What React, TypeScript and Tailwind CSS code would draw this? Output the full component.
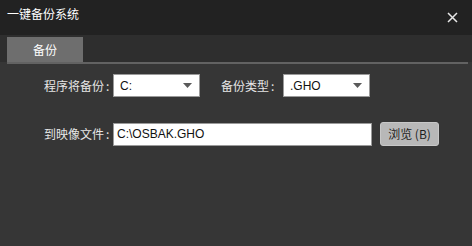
const font = "font-['Microsoft_YaHei','Noto_Sans_CJK_SC',sans-serif]";

const Arrow = () => (
  <svg width="9" height="5" viewBox="0 0 9 5" className="shrink-0">
    <path d="M0 0 H9 L4.5 5 Z" fill="#5a5a5a" />
  </svg>
);

const Select = ({ value }: { value: string }) => (
  <div className="flex h-[23px] w-[87px] items-center justify-between border border-[#9a9a9a] bg-white pl-[6px] pr-[7px] text-[12px] text-[#111] font-['Liberation_Sans',sans-serif]">
    <span>{value}</span>
    <Arrow />
  </div>
);

const App = () => {
  return (
    <div className={`flex h-[246px] w-[472px] flex-col bg-[#363636] ${font}`}>
      {/* title bar */}
      <div className="flex h-[35px] items-start justify-between bg-[#222222] pl-[7px] pr-[14px] pt-[7px]">
        <span className="text-[12px] leading-[13px] text-white">一键备份系统</span>
        <svg width="11" height="11" viewBox="0 0 11 11" className="mt-[5px]">
          <path d="M1 1 L10 10 M10 1 L1 10" stroke="#e8e8e8" strokeWidth="1.5" />
        </svg>
      </div>

      {/* tab strip */}
      <div className="flex h-[27px] bg-[#2e2e2e] pl-[7px] pt-[2px]">
        <div className="flex w-[76px] items-center justify-center bg-[#6e6e6e] text-[12px] text-white">
          备份
        </div>
      </div>
      <div className="ml-[7px] mr-[4px] h-[2px] bg-[#626262]" />

      {/* form */}
      <div className="flex flex-col gap-[25px] pl-[44px] pt-[10px] text-[12px] text-[#e6e6e6]">
        <div className="flex items-center">
          <span className="w-[69px]">程序将备份<span className="ml-[2px]">:</span></span>
          <Select value="C:" />
          <span className="ml-[21px] w-[62px]">备份类型<span className="ml-[2px]">:</span></span>
          <Select value=".GHO" />
        </div>
        <div className="flex items-center">
          <span className="w-[69px]">到映像文件<span className="ml-[2px]">:</span></span>
          <div className="flex h-[23px] w-[259px] items-center border border-[#9a9a9a] bg-white pl-[3px] text-[12px] text-[#111] font-['Liberation_Sans',sans-serif]">
            C:\OSBAK.GHO
          </div>
          <button className="ml-[8px] flex h-[24px] w-[59px] items-center justify-center rounded-[3px] border border-[#c8c8c8] bg-[#b8b8b8] text-[12px] text-[#1e1e1e]">
            浏览 (B)
          </button>
        </div>
      </div>
    </div>
  );
};

export default App;
